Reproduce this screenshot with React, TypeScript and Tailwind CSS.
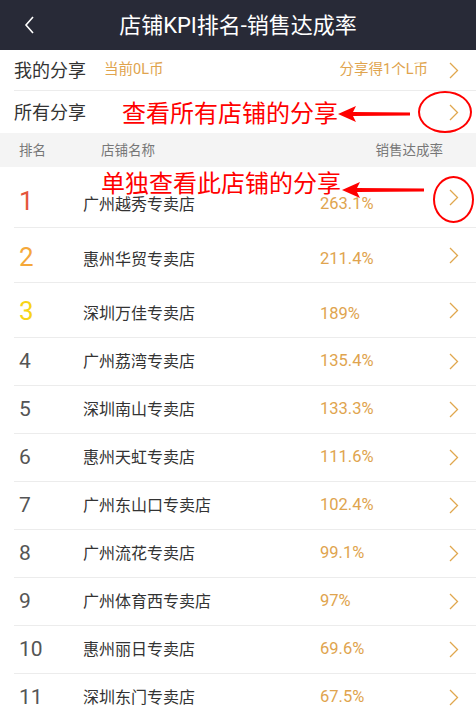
import React from "react";

const rows = [
  { rank: 1, name: "广州越秀专卖店", rate: "263.1%", h: "h-[61px]", color: "text-[#e4553b]", rm: "mt-[8px]", nm: "mt-[15px]" },
  { rank: 2, name: "惠州华贸专卖店", rate: "211.4%", h: "h-[55px]", color: "text-[#f5a83a]", rm: "mt-[4px]", nm: "mt-[9px]" },
  { rank: 3, name: "深圳万佳专卖店", rate: "189%", h: "h-[55px]", color: "text-[#f7d417]", rm: "mt-[2px]", nm: "mt-[8px]" },
  { rank: 4, name: "广州荔湾专卖店", rate: "135.4%", h: "h-[48px]", color: "text-[#555]", rm: "", nm: "" },
  { rank: 5, name: "深圳南山专卖店", rate: "133.3%", h: "h-[48px]", color: "text-[#555]", rm: "", nm: "" },
  { rank: 6, name: "惠州天虹专卖店", rate: "111.6%", h: "h-[48px]", color: "text-[#555]", rm: "", nm: "" },
  { rank: 7, name: "广州东山口专卖店", rate: "102.4%", h: "h-[48px]", color: "text-[#555]", rm: "", nm: "" },
  { rank: 8, name: "广州流花专卖店", rate: "99.1%", h: "h-[48px]", color: "text-[#555]", rm: "", nm: "" },
  { rank: 9, name: "广州体育西专卖店", rate: "97%", h: "h-[48px]", color: "text-[#555]", rm: "", nm: "" },
  { rank: 10, name: "惠州丽日专卖店", rate: "69.6%", h: "h-[48px]", color: "text-[#555]", rm: "", nm: "" },
  { rank: 11, name: "深圳东门专卖店", rate: "67.5%", h: "h-[48px]", color: "text-[#555]", rm: "", nm: "" },
];

// 细箭头
const Chevron = ({ className = "" }: { className?: string }) => (
  <svg width="10" height="17" viewBox="0 0 10 17" fill="none" className={className}>
    <path d="M1 1l7.5 7.5L1 16" stroke="#e0a74e" strokeWidth="1.3" />
  </svg>
);

// 红色标注箭头
const RedArrow = ({ w }: { w: number }) => (
  <svg width={w} height="16" viewBox={`0 0 ${w} 16`}>
    <polygon points={`0,8 18,0 15,6 ${w},6.5 ${w},9.5 15,10 18,16`} fill="#ff0000" />
  </svg>
);

export default function App() {
  return (
    <div
      className="relative w-[476px] h-[706px] overflow-hidden bg-white"
      style={{ fontFamily: "Roboto, 'Noto Sans CJK SC', sans-serif" }}
    >
      {/* 顶部栏 */}
      <div className="relative h-[50px] bg-[#282a37] flex items-center justify-center">
        <svg width="12" height="18" viewBox="0 0 12 18" className="absolute left-[24px] top-[16px]" fill="none">
          <path d="M9 1L2 9l7 8" stroke="#fff" strokeWidth="1.6" />
        </svg>
        <span className="text-white text-[22px]">店铺KPI排名-销售达成率</span>
      </div>

      {/* 分享 */}
      <div className="pl-[14px]">
        <div className="h-[41px] flex items-center border-b border-[#ececec] pr-[17px]">
          <span className="text-[18px] text-[#333] w-[90px]">我的分享</span>
          <span className="text-[14.5px] text-[#e0a44e]">当前0L币</span>
          <span className="ml-auto text-[14.5px] text-[#e0a44e] mr-[21px]">分享得1个L币</span>
          <Chevron />
        </div>
        <div className="h-[42px] flex items-center pr-[17px]">
          <span className="text-[18px] text-[#333]">所有分享</span>
          <Chevron className="ml-auto" />
        </div>
      </div>

      {/* 表头 */}
      <div className="h-[34px] bg-[#f4f4f4] flex items-center text-[13.5px] text-[#777]">
        <span className="pl-[19px] w-[101px]">排名</span>
        <span>店铺名称</span>
        <span className="ml-auto pr-[33px]">销售达成率</span>
      </div>

      {/* 列表 */}
      <div className="pl-[14px]">
        {rows.map((r) => (
          <div key={r.rank} className={`${r.h} flex items-center border-b border-[#ececec] pr-[17px]`}>
            <span className={`${r.color} ${r.rank <= 3 ? "text-[26px]" : "text-[21px]"} w-[69px] pl-[5px] ${r.rm}`}>
              {r.rank}
            </span>
            <span className={`text-[16px] text-[#333] w-[237px] ${r.nm}`}>{r.name}</span>
            <span className={`text-[16.5px] text-[#e0a44e] ${r.nm}`}>{r.rate}</span>
            <Chevron className="ml-auto" />
          </div>
        ))}
      </div>

      {/* 标注 */}
      <div className="absolute left-[122px] top-[98px] flex items-center">
        <span className="text-[24px] leading-[32px] text-[#ff0000]">查看所有店铺的分享</span>
        <RedArrow w={72} />
      </div>
      <div className="absolute left-[418px] top-[91px] w-[54px] h-[42px] rounded-[50%] border-[2.5px] border-[#ff0000]" />

      <div className="absolute left-[101px] top-[170px] text-[24px] leading-[28px] text-[#ff0000]">单独查看此店铺的分享</div>
      <div className="absolute left-[342px] top-[182px]">
        <RedArrow w={82} />
      </div>
      <div className="absolute left-[433px] top-[176px] w-[41px] h-[47px] rounded-[50%] border-[2.5px] border-[#ff0000]" />
    </div>
  );
}
